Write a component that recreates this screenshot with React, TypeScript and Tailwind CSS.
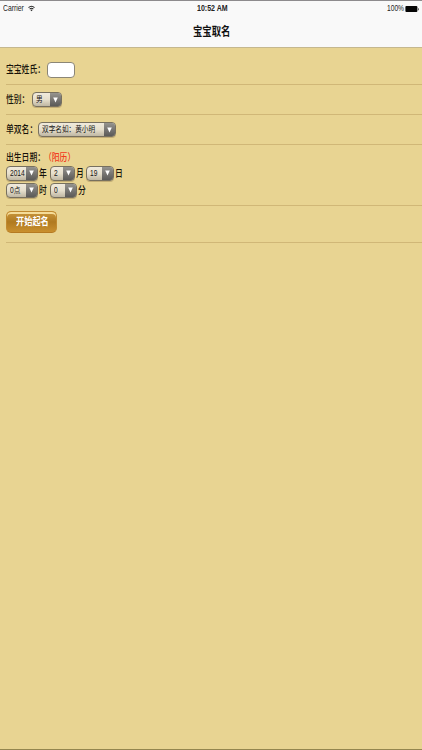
import React from "react";

const cjk = "font-['Liberation_Sans','Noto_Sans_CJK_SC',sans-serif]";

// Text set in a box of fixed width, with condensed glyphs
function Narrow({ className = "", scale = "scale-x-[0.78]", children }: { className?: string; scale?: string; children: React.ReactNode }) {
  return (
    <span className={`block shrink-0 whitespace-nowrap origin-left ${scale} ${className}`}>
      {children}
    </span>
  );
}

function SelectBox({ value, className }: { value: string; className: string }) {
  return (
    <button
      className={`flex h-[15px] shrink-0 overflow-hidden rounded-[4px] border border-[#77705f] bg-linear-to-b from-[#f0eadc] via-[#e6dfcc] to-[#bfb7a3] shadow-[0_1px_0_#c3ad75] ${className}`}
    >
      <span className="flex h-full min-w-0 flex-1 items-center pl-[3px]">
        <Narrow className="w-0 text-[8.5px] leading-[13px] text-[#151515]">{value}</Narrow>
      </span>
      <span className="flex h-full w-[11px] shrink-0 items-center justify-center bg-linear-to-b from-[#96948f] to-[#5b5a58]">
        <svg width="5" height="6" viewBox="0 0 5 6">
          <path d="M.2 .5h4.6L2.5 5.5z" fill="#fff" />
        </svg>
      </span>
    </button>
  );
}

function StatusBar() {
  return (
    <div className="flex h-[15px] items-center justify-between pl-[3px] pr-[3px] text-[9px] leading-[15px] text-[#222]">
      <div className="flex w-[120px] items-center">
        <Narrow className="w-[25px]" scale="scale-x-[0.76]">Carrier</Narrow>
        <svg className="shrink-0" width="7" height="7" viewBox="0 0 8 7" fill="none" stroke="#222" strokeWidth="1.15">
          <path d="M.6 2.5Q4-.7 7.4 2.5M1.9 4.1Q4 2.2 6.1 4.1" />
          <path d="M2.8 5.1Q4 4.1 5.2 5.1L4 6.6z" fill="#222" stroke="none" />
        </svg>
      </div>
      <div className="w-[29px]">
        <Narrow className="w-[29px] font-bold">10:52 AM</Narrow>
      </div>
      <div className="flex w-[120px] items-center justify-end">
        <Narrow className="w-[18px]" scale="scale-x-[0.74]">100%</Narrow>
        <svg className="shrink-0" width="14" height="8" viewBox="0 0 14 8">
          <rect x=".4" y=".9" width="12" height="6.2" rx="1" fill="#050505" />
          <path d="M13 3v2.4q.8-.4.8-1.2T13 3z" fill="#333" />
        </svg>
      </div>
    </div>
  );
}

export default function App() {
  return (
    <div className={`flex h-[750px] w-[422px] flex-col overflow-hidden border-t border-b border-t-[#8d8b8d] border-b-[#94864f] bg-[#e8d492] text-[10px] text-[#17130a] ${cjk}`}>
      <header className="h-[47px] shrink-0 border-b border-[#c5b88f] bg-[#f9f9f9]">
        <StatusBar />
        <h1 className="flex h-[31px] items-center justify-center text-[12px] font-bold text-[#111]">
          <Narrow className="w-[37px]">宝宝取名</Narrow>
        </h1>
      </header>

      <main className="ml-[6px] flex flex-col">
        <div className="flex h-[37px] items-center border-b border-[#d0b777] pt-[7px]">
          <Narrow className="w-[41px] font-medium">宝宝姓氏：</Narrow>
          <input className="h-[16px] w-[28px] rounded-[4px] border border-[#8b8676] bg-white" />
        </div>

        <div className="flex h-[30px] items-center border-b border-[#d0b777]">
          <Narrow className="w-[26px] font-medium">性别：</Narrow>
          <SelectBox value="男" className="w-[30px]" />
        </div>

        <div className="flex h-[30px] items-center border-b border-[#d0b777]">
          <Narrow className="w-[32px] font-medium">单双名：</Narrow>
          <SelectBox value="双字名如：黄小明" className="w-[78px]" />
        </div>

        <div className="h-[61px] border-b border-[#d0b777] pt-[5px]">
          <div className="flex h-[15px] items-center">
            <Narrow className="w-[38px] font-medium">出生日期：</Narrow>
            <Narrow className="w-[31px] font-medium text-[#f23a20]">（阳历）</Narrow>
          </div>
          <div className="flex h-[16px] items-center">
            <SelectBox value="2014" className="w-[32px]" />
            <Narrow className="ml-[1px] w-[11px] font-medium">年</Narrow>
            <SelectBox value="2" className="w-[25px]" />
            <Narrow className="ml-[1px] w-[10px] font-medium">月</Narrow>
            <SelectBox value="19" className="w-[28px]" />
            <Narrow className="ml-[1px] w-[8px] font-medium">日</Narrow>
          </div>
          <div className="flex h-[18px] items-center">
            <SelectBox value="0点" className="w-[32px]" />
            <Narrow className="ml-[1px] w-[11px] font-medium">时</Narrow>
            <SelectBox value="0" className="w-[27px]" />
            <Narrow className="ml-[1px] w-[8px] font-medium">分</Narrow>
          </div>
        </div>

        <div className="flex h-[37px] items-center border-b border-[#d0b777] pb-[4px]">
          <button className="flex h-[22px] w-[51px] items-center rounded-[5px] border border-[#c18a30] border-b-[#b57a22] bg-linear-to-b from-[#c9963b] via-[#b07a20] to-[#c9902f] pl-[9px] shadow-[inset_0_2px_0_#f5dc98]">
            <Narrow className="w-[32px] text-[10.5px] font-bold text-white">开始起名</Narrow>
          </button>
        </div>
      </main>
    </div>
  );
}
